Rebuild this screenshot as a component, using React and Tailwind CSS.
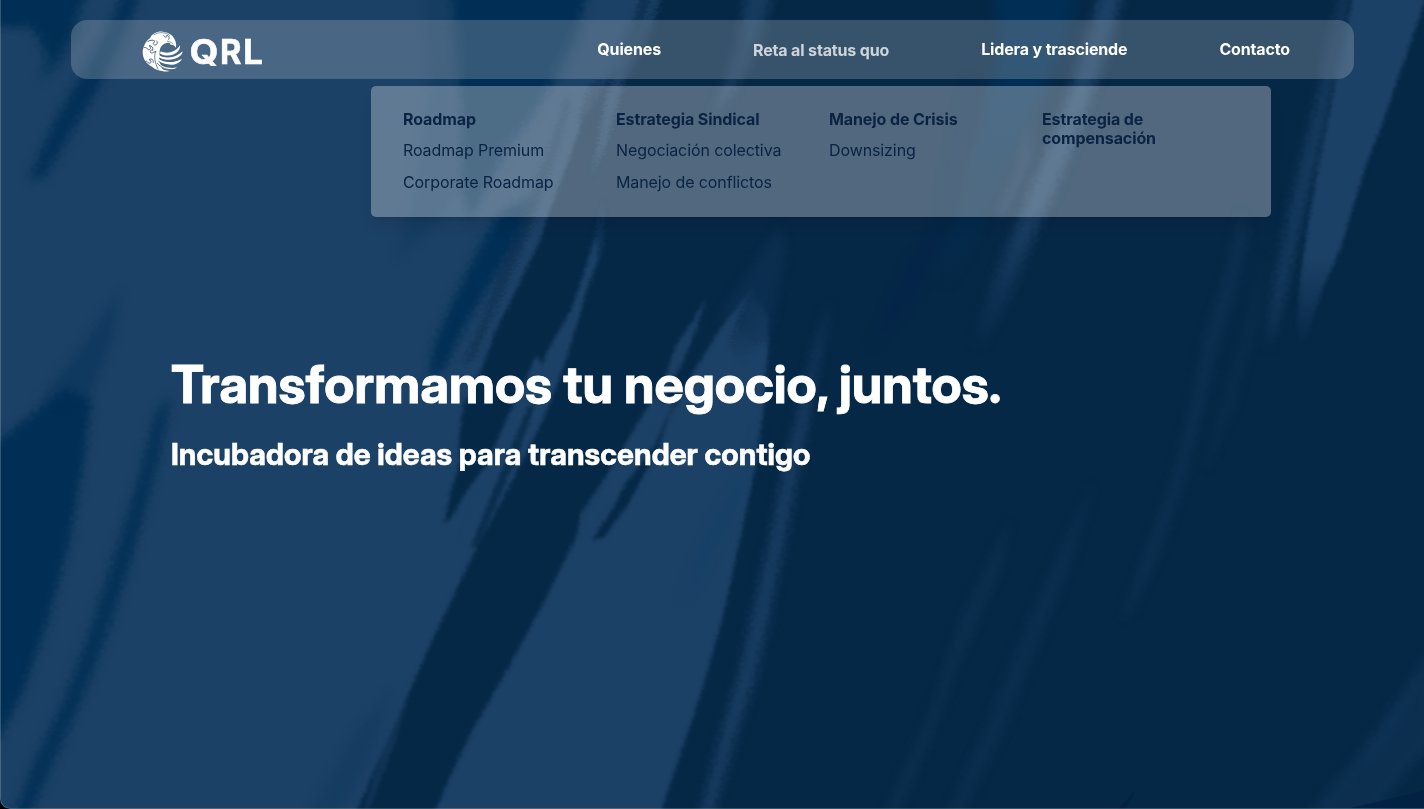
import React from "react";

const LIGHT = "#1c4166";
const DARK = "#062847";
const MID = "#002e54";

function Backdrop() {
  return (
    <svg className="absolute inset-0 h-full w-full" viewBox="0 0 1424 809" preserveAspectRatio="xMidYMid slice" aria-hidden="true">
      <defs>
        <filter id="edge" x="-60" y="-60" width="1544" height="929" filterUnits="userSpaceOnUse" colorInterpolationFilters="sRGB">
          <feGaussianBlur in="SourceGraphic" stdDeviation="1.4" result="b" />
          <feTurbulence type="fractalNoise" baseFrequency="0.25 0.4" numOctaves="3" seed="4" result="n" />
          <feDisplacementMap in="b" in2="n" scale="6" xChannelSelector="R" yChannelSelector="G" />
          <feGaussianBlur stdDeviation="0.8" />
        </filter>
        <filter id="soft" x="-60" y="-60" width="1544" height="929" filterUnits="userSpaceOnUse" colorInterpolationFilters="sRGB">
          <feGaussianBlur in="SourceGraphic" stdDeviation="5" result="b" />
          <feTurbulence type="fractalNoise" baseFrequency="0.2 0.45" numOctaves="3" seed="9" result="n" />
          <feDisplacementMap in="b" in2="n" scale="13" xChannelSelector="R" yChannelSelector="G" />
          <feGaussianBlur stdDeviation="0.8" />
        </filter>
        <filter id="streak" x="-60" y="-60" width="1544" height="929" filterUnits="userSpaceOnUse" colorInterpolationFilters="sRGB">
          <feGaussianBlur in="SourceGraphic" stdDeviation="2.4" result="b" />
          <feTurbulence type="fractalNoise" baseFrequency="0.25 0.45" numOctaves="3" seed="2" result="n" />
          <feDisplacementMap in="b" in2="n" scale="9" xChannelSelector="R" yChannelSelector="G" />
          <feGaussianBlur stdDeviation="0.7" />
        </filter>
        <linearGradient id="fadeDown" x1="0" y1="0" x2="0" y2="1">
          <stop offset="0.6" stopColor={LIGHT} />
          <stop offset="1" stopColor={LIGHT} stopOpacity="0" />
        </linearGradient>
        <linearGradient id="wedgeDown" x1="0" y1="0" x2="0" y2="1">
          <stop offset="0.76" stopColor={LIGHT} />
          <stop offset="1" stopColor={LIGHT} stopOpacity="0" />
        </linearGradient>
        <linearGradient id="wedgeUp" gradientUnits="userSpaceOnUse" x1="0" y1="295" x2="0" y2="365">
          <stop offset="0" stopColor={DARK} />
          <stop offset="1" stopColor={DARK} stopOpacity="0" />
        </linearGradient>
        <linearGradient id="midDown" x1="0" y1="0" x2="0" y2="1">
          <stop offset="0.35" stopColor={MID} />
          <stop offset="1" stopColor={MID} stopOpacity="0" />
        </linearGradient>
      </defs>
      <rect width="1424" height="809" fill={LIGHT} />

      <g filter="url(#soft)" fill={MID}>
        <path d="M-60-60H100L84 0 70 32 52 64 44 50 32 27-60 28Z" />
        <path d="M128-20H146L122 40 98 90 72 132 44 178 28 180 54 122 88 62 112 20Z" opacity=".9" />
        <path d="M60 30 44 60 40 80 55 70 90 20Z" opacity=".6" />
        <path d="M-60 478 0 440 42 406 66 388 92 400 82 470 70 540 48 620 22 694 0 735-60 850Z" />
        <path d="M120 290 82 345 40 400 60 420 90 400 112 340Z" opacity=".4" />
        <path d="M172 396 156 412 138 480 116 550 92 625 64 700 34 762 8 830 24 830 50 770 82 700 108 632 134 552 156 470Z" opacity=".85" />
        <path d="M390 690 350 740 300 830 330 830 370 760Z" opacity=".22" />
        <path d="M452-20H592L574 40 554 80 530 120 506 150 484 195 468 220 462 180 462 110 458 60Z" />
        <path d="M425-20 430 80 410 210 395 260 430 230 470 180 470 0Z" opacity=".25" />
        <path d="M534 195 500 212 478 250 456 295 434 345 428 385 444 368 466 325 492 280 514 245Z" />
      </g>

      <g filter="url(#edge)">
        <path d="M662-20 644 20 622 58 600 92 582 122 568 162 550 210 540 240 516 290 496 330 481 370 464 403 459 438 460 462 450 495 444 524 452 516 466 492 488 462 506 420 522 388 536 355 546 370 550 405 528 450 502 500 478 545 455 592 430 645 402 708 378 762 355 815H433L458 760 475 725 510 665 545 600 572 545 598 500 622 455 650 405 675 400 655 445 625 485 612 510 592 540 604 538 628 500 656 455 668 418 692 374 722 326 752 290 768 316 768 350 764 405 755 470 740 540 722 620 702 690 682 750 658 820H1480V-20Z" fill={DARK} />
        <path d="M597 235 584 275 570 312 548 350 532 395 506 432 490 462 474 498 460 540 474 540 492 510 516 470 538 430 552 398 566 360 578 320 588 285 598 258Z" fill={LIGHT} />
        <path d="M529 405 512 445 490 498 470 548 478 545 500 496 519 450 535 405Z" fill={DARK} opacity=".8" />
        <path d="M706 298 692 322 676 345 662 386 642 415 622 450 598 488 580 515 576 540 596 514 620 486 646 436 664 396 682 364 694 335Z" fill={LIGHT} opacity=".92" />
        <path d="M674 403 656 445 625 486 616 505 598 532 608 530 628 505 654 455Z" fill={DARK} opacity=".9" />
        <path d="M412 680 388 735 364 809 368 812 396 740Z" fill={LIGHT} opacity=".45" />
      </g>

      <g filter="url(#streak)">
        <path d="M566 95 556 130 536 180 520 225 498 275 484 315 468 352 462 365 474 358 492 318 508 282 528 235 545 185 560 145 570 105Z" fill={DARK} opacity=".45" />
        <path d="M616 60 606 95 600 135 592 175 606 145 616 110 626 75 650 30 664-10 645-10Z" fill={LIGHT} opacity=".75" />
        <path d="M590 85 578 120 586 130 600 95 604 80Z" fill={DARK} opacity=".6" />
        <path d="M644-20 634 20 618 55 626 55 644 22 656-20Z" fill={DARK} opacity=".6" />
        <path d="M604 200 594 240 580 285 590 285 604 245Z" fill={LIGHT} opacity=".4" />
        <path d="M748 290 728 345 740 366 752 350 772 335 780 296 764 276Z" fill="url(#wedgeUp)" opacity=".85" />
      </g>

      <g filter="url(#soft)">
        <path d="M780 225 755 262 730 300 715 325 740 310 768 340 776 300 786 250Z" fill={LIGHT} opacity=".25" />
        <path d="M748-20H776L762 30 740 80 712 120 722 90 738 50Z" fill={LIGHT} opacity=".75" />
        <path d="M830 300 818 340 804 390 792 440 780 490 768 550 754 610 740 670 724 725 700 815 712 815 734 740 754 680 768 620 782 550 794 490 806 430 816 370Z" fill={LIGHT} opacity=".85" />
        <path d="M762 420 745 470 712 520 680 600 694 590 735 510 756 460Z" fill="#0b4068" opacity=".3" />
        <path d="M992-20H1082L1066 40 1040 100 1012 160 980 230 950 290 930 280 958 210 980 120 1000 50Z" fill="url(#midDown)" />
        <path d="M1030 120 1016 170 996 215 1006 215 1030 160Z" fill={LIGHT} opacity=".6" />
        <path d="M1104-20H1126L1110 40 1093 90 1075 140 1055 190 1030 245 1008 300 984 350 970 350 990 290 1010 240 1034 180 1056 130 1074 80 1090 30Z" fill="url(#fadeDown)" />
        <path d="M970 60 955 130 940 210 955 190 980 100Z" fill="#00234a" opacity=".4" />
        <path d="M950 215 915 250 890 300 870 350 920 290Z" fill="#002048" opacity=".35" />
        <path d="M1344-20H1352L1336 70 1320 150 1302 220 1286 290 1268 350 1274 290 1290 210 1304 150 1322 80Z" fill={LIGHT} opacity=".7" />
        <path d="M1240 210 1226 270 1204 340 1190 410 1172 480 1146 550 1122 620 1132 610 1160 550 1184 480 1200 420 1216 350 1236 290 1250 230Z" fill={LIGHT} opacity=".28" />
        <path d="M1262 250 1244 330 1220 410 1204 470 1212 460 1236 400 1258 320Z" fill={LIGHT} opacity=".15" />
        <path d="M1094 480 1060 550 1020 640 980 740 946 815H962L1000 740 1040 640 1072 560Z" fill={LIGHT} opacity=".22" />
        <path d="M1010 520 960 620 935 700 884 815H898L930 740 956 670 1000 570Z" fill={LIGHT} opacity=".24" />
        <path d="M1434 645 1400 700 1366 750 1336 780 1305 820H1370L1400 780 1434 740Z" fill={LIGHT} opacity=".3" />
        <path d="M1434 645 1400 695 1366 745 1350 765 1372 755 1400 710Z" fill={LIGHT} opacity=".25" />
      </g>

      <g filter="url(#edge)">
        <path d="M1357-20H1432L1415 30 1398 78 1384 120 1366 165 1352 210 1340 250 1322 290 1304 345 1296 345 1300 280 1308 225 1318 170 1330 110 1342 50Z" fill="url(#wedgeDown)" />
      </g>
      <path d="M1350 808 1424 791V809Z" fill="#002142" opacity=".8" />
      <path d="M1118 809 1137 789 1125 809Z" fill="#00213f" opacity=".8" />
    </svg>
  );
}

function EagleMark() {
  return (
    <svg className="h-[42px] w-[41px]" viewBox="36 33 123 126" aria-hidden="true">
      <path
        fill="#fff"
        d="M60 58C66 43 84 36 98 38C119 40 131 51 136 66C139 73 139 79 137 86C133 79 128 76 122 78C122 72 116 70 110 72C100 74 92 82 90 90C88 98 89 106 90 114C86 120 90 140 101 155C91 157 76 152 66 143C48 134 38 118 38 98C40 82 47 66 60 58Z"
      />
      <g fill="#fff">
        <path d="M92 97C112 107 137 99 150 79C153 103 118 119 90 104Z" />
        <path d="M90 110C112 120 140 115 158 97C156 118 119 130 88 116Z" />
        <path d="M86 121C104 131 132 133 156 119C144 142 112 141 86 127Z" />
        <path d="M82 129C96 145 120 150 142 145C124 158 96 150 80 134Z" />
        <path d="M78 134C88 149 102 155 120 155C102 163 82 152 76 138Z" />
      </g>
      <g fill="none" stroke="#4a6782" strokeLinecap="round" strokeWidth="3">
        <path d="M72 47C86 38 107 39 119 49" strokeWidth="2" />
        <path d="M54 67C62 62 72 62 75 68C69 70 68 76 74 78C82 79 84 71 80 66" />
        <path d="M100 50C106 58 113 54 110 49C118 50 119 57 116 61" />
        <path d="M42 86C51 82 50 91 56 92C63 92 63 84 57 80C66 80 70 86 68 94C62 91 58 97 63 102C70 103 72 96 78 98" />
        <path d="M76 98C72 112 74 132 84 150" strokeWidth="2.5" />
        <path d="M46 127C54 124 52 132 58 133C66 132 64 123 57 122C66 117 70 122 70 130" />
        <path d="M112 66C118 70 124 68 129 74" strokeWidth="2" />
        <path d="M90 107C110 120 138 114 156 94M88 118C108 131 136 130 157 115M86 127C102 142 126 144 148 136M82 133C94 148 112 153 130 152" strokeWidth="2.8" />
      </g>
    </svg>
  );
}

const NAV = [
  { label: "Quienes" },
  { label: "Reta al status quo", active: true },
  { label: "Lidera y trasciende" },
  { label: "Contacto" },
];

const MENU = [
  { title: "Roadmap", links: ["Roadmap Premium", "Corporate Roadmap"] },
  { title: "Estrategia Sindical", links: ["Negociación colectiva", "Manejo de conflictos"] },
  { title: "Manejo de Crisis", links: ["Downsizing"] },
  { title: "Estrategia de compensación", links: [] },
];

export default function App() {
  return (
    <div className="h-[809px] w-full bg-black font-['Inter',sans-serif]">
      <div className="relative h-full w-full overflow-hidden rounded-bl-[10px]">
        <Backdrop />
        <div className="relative flex h-full flex-col pt-5 pr-[70px] pl-[71px]">
          <header className="relative">
            <nav className="flex h-[59px] items-center justify-between rounded-2xl bg-white/20 pr-16 pl-[71px] backdrop-blur-[5px]">
              <a className="mt-[3px] flex items-center gap-[7px]">
                <EagleMark />
                <svg className="h-[44px] w-[80px]" viewBox="0 0 80 44" fill="#fff" stroke="#fff" strokeWidth="0.5" fontFamily="Inter, sans-serif" fontWeight="700" fontSize="33.5">
                  <text x="-0.5" y="34.5" textLength="29" lengthAdjust="spacingAndGlyphs">Q</text>
                  <text x="30" y="34.5" textLength="21.5" lengthAdjust="spacingAndGlyphs">R</text>
                  <text x="53" y="34.5" textLength="20" lengthAdjust="spacingAndGlyphs">L</text>
                </svg>
              </a>
              <ul className="-mt-0.5 flex gap-[92px] text-base leading-normal font-bold tracking-[-0.15px] text-white">
                {NAV.map((n) => (
                  <li key={n.label} className={n.active ? "translate-y-px opacity-75" : ""}>
                    {n.label}
                  </li>
                ))}
              </ul>
            </nav>
            <div className="absolute top-[66px] left-[300px] grid h-[131px] w-[900px] grid-cols-4 gap-4 rounded-[5px] bg-white/30 px-8 pt-6 text-base leading-[19px] tracking-[-0.1px] text-[#0a2342] shadow-lg">
              {MENU.map((c) => (
                <div key={c.title}>
                  <h3 className="font-bold">{c.title}</h3>
                  <ul className="mt-3 space-y-[13px]">
                    {c.links.map((l) => (
                      <li key={l}>{l}</li>
                    ))}
                  </ul>
                </div>
              ))}
            </div>
          </header>
          <main className="mt-[274px] pl-[100px] font-['Inter_Display','Inter',sans-serif] font-bold whitespace-nowrap text-white">
            <h1 className="text-[52px] leading-[64px] [-webkit-text-stroke:0.8px_white]">Transformamos tu negocio, juntos.</h1>
            <h2 className="mt-[19px] text-[30px] leading-9 tracking-[0.1px] [-webkit-text-stroke:0.5px_white]">
              Incubadora de ideas para transcender contigo
            </h2>
          </main>
        </div>
        <div className="pointer-events-none absolute inset-0 rounded-bl-[10px] border-b border-l border-white/20" />
      </div>
    </div>
  );
}
